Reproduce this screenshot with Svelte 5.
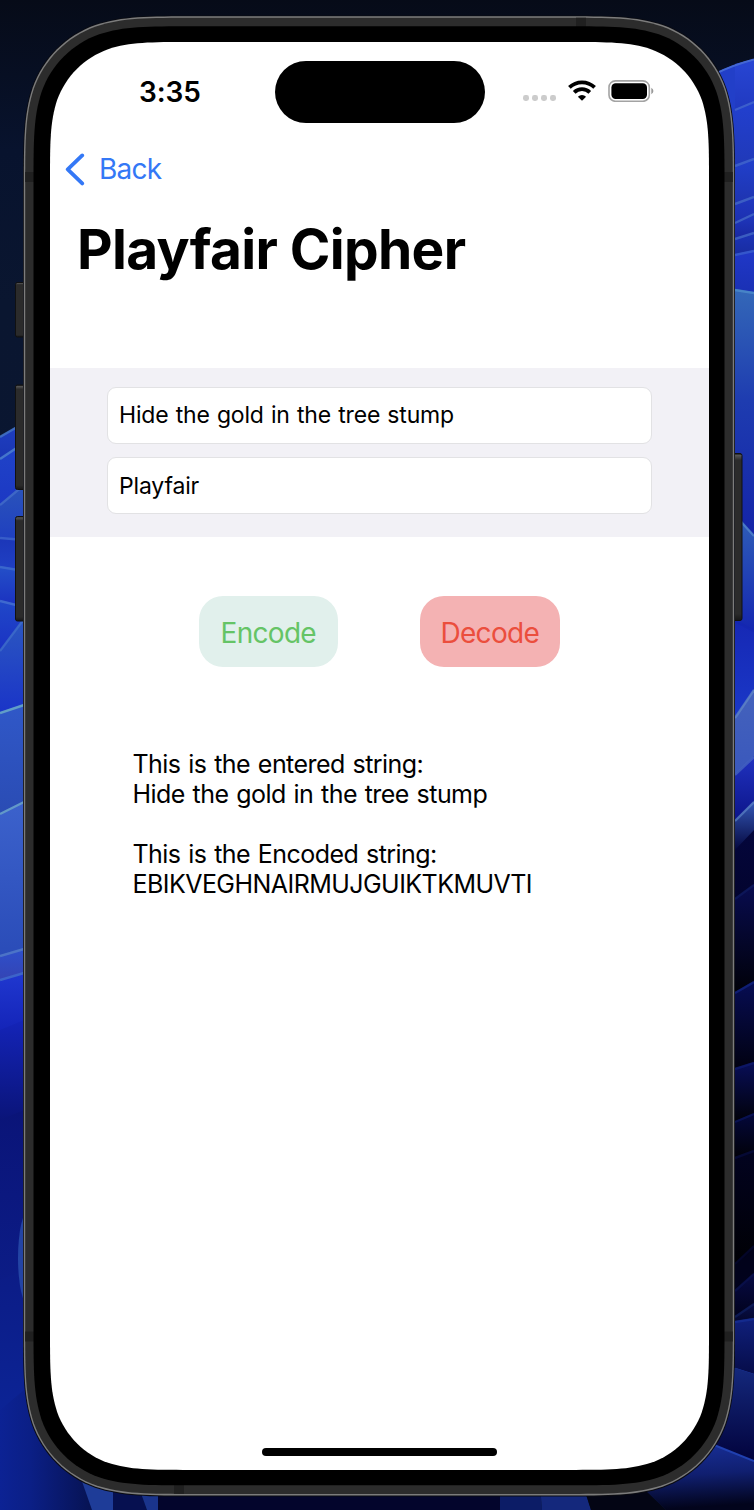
<script>
  let message = $state('Hide the gold in the tree stump');
  let key = $state('Playfair');
  const output = 'This is the entered string:\nHide the gold in the tree stump\n\nThis is the Encoded string:\nEBIKVEGHNAIRMUJGUIKTKMUVTI';

  // Continuous-curvature rounded rectangle
  function squircle(x, y, w, h, r) {
    const corner = (cx, cy, ax, ay, bx, by) => {
      // a: direction along the incoming edge, b: direction along the outgoing edge
      const p = (u, v) => `${(cx - ax * u * r + bx * v * r).toFixed(2)} ${(cy - ay * u * r + by * v * r).toFixed(2)}`;
      return `L${p(1.52866, 0)}C${p(1.08849, 0)} ${p(0.86841, 0)} ${p(0.63149, 0.0775)}` +
        `C${p(0.37282, 0.16906)} ${p(0.16906, 0.37282)} ${p(0.0775, 0.63149)}` +
        `C${p(0, 0.86841)} ${p(0, 1.08849)} ${p(0, 1.52866)}`;
    };
    return (`M${x + w / 2} ${y}` + corner(x + w, y, 1, 0, 0, 1) + corner(x + w, y + h, 0, 1, -1, 0) +
      corner(x, y + h, -1, 0, 0, -1) + corner(x, y, 0, -1, 1, 0) + 'Z');
  }

  // Wallpaper petals: y at the left end, y at the right end, edge, top, bottom colours
  const leftPetals = [
    [436, 422, '#4f83c4', '#1f3fc0', '#1a36b4'],
    [458, 442, '#5a92d0', '#2044c8', '#1c38c4'],
    [504, 484, '#4a74cc', '#2b55ba', '#1f3fc0'],
    [537, 539, '#4672d2', '#1b36b8', '#2040c4'],
    [566, 570, '#4674d0', '#2450c8', '#1a30c0'],
    [600, 606, '#4f7cd4', '#2048c8', '#1a32c4'],
    [650, 618, '#4474cc', '#2c58c0', '#1a34c8'],
    [712, 704, '#7cc4c8', '#3058c8', '#2a4cb4'],
    [813, 801, '#78b8c8', '#3c62cc', '#2a4cb8'],
    [955, 948, '#5c88c8', '#2e50cc', '#3444b4'],
    [979, 972, '#4c7cc8', '#2038d0', '#1424b8'],
    [1030, 1020, '#1424b8', '#1424b8', '#0a1478'],
    [1120, 1110, '#0a1478', '#0a1478', '#0c1c86'],
    [1280, 1270, '#0c1c86', '#0c1c86', '#0c2496'],
    [1420, 1410, '#0c2496', '#0c2496', '#0a1f88']
  ];
  const rightPetals = [
    [64, 59, '#2846d4', '#2846d4', '#2039c0'],
    [109, 101, '#4a70cc', '#2240d0', '#2039b8'],
    [165, 158, '#4a70cc', '#2140cc', '#1e34b0'],
    [203, 196, '#4c74c8', '#2038c0', '#1c30b0'],
    [222, 213, '#4c74c8', '#2038c0', '#1828a0'],
    [238, 232, '#4c74c8', '#1c34b8', '#182ca0'],
    [254, 250, '#4068d0', '#2038c8', '#1a30b4'],
    [289, 292, '#5294d0', '#3468b8', '#1e3cb0'],
    [400, 400, '#1e3cb0', '#1e3cb0', '#1424a8'],
    [514, 535, '#5a90d0', '#3060b8', '#1426b0'],
    [620, 630, '#1426b0', '#1628b4', '#1a38c8'],
    [717, 689, '#668cc8', '#4462bc', '#3a58bc'],
    [774, 756, '#4e70c4', '#2032c0', '#0c1488'],
    [820, 801, '#6088c8', '#3458b8', '#04063c'],
    [850, 830, '#04063c', '#04063c', '#03042e'],
    [898, 884, '#101c60', '#080c50', '#010108'],
    [992, 981, '#142888', '#070d54', '#010110'],
    [1068, 1062, '#101c70', '#080e58', '#010108'],
    [1121, 1113, '#0c1760', '#04083c', '#010108'],
    [1157, 1150, '#080d40', '#020320', '#000004'],
    [1263, 1245, '#050830', '#01021a', '#01021c'],
    [1290, 1273, '#0b1350', '#070b45', '#01021c'],
    [1316, 1303, '#102060', '#09104a', '#04072c'],
    [1321, 1318, '#173098', '#10207c', '#060c48'],
    [1368, 1374, '#2040b4', '#14287c', '#02033c'],
    [1453, 1461, '#122078', '#122078', '#04071c']
  ];
  const band = (list, i, x0, x1) => {
    const [a, b] = list[i];
    const next = list[i + 1] ?? [1510, 1510];
    return `${x0},${a} ${x1},${b} ${x1},${next[1] + 1} ${x0},${next[0] + 1}`;
  };
</script>

{#snippet petals(list, x0, x1, name)}
  {#each list as [a, b, edge, top, bottom], i}
    <linearGradient id="{name}{i}" x1="0" y1="0" x2="0" y2="1">
      <stop offset="0" stop-color={top} />
      <stop offset="1" stop-color={bottom} />
    </linearGradient>
    <polygon points={band(list, i, x0, x1)} fill="url(#{name}{i})" />
    {#if edge !== top}
      <line x1={x0} y1={a + 1} x2={x1} y2={b + 1} stroke={edge} stroke-width="2.4" opacity=".65" />
    {/if}
  {/each}
{/snippet}

<div class="stage">
  <svg class="backdrop" width="754" height="1510" viewBox="0 0 754 1510" aria-hidden="true">
    <defs>
      <linearGradient id="night" x1="0" y1="0" x2="0" y2="1">
        <stop offset="0" stop-color="#060b18" />
        <stop offset=".1" stop-color="#08132e" />
        <stop offset=".2" stop-color="#0a1630" />
        <stop offset="1" stop-color="#0b1734" />
      </linearGradient>
      <linearGradient id="key" x1="0" y1="0" x2="0" y2="1">
        <stop offset="0" stop-color="#111" />
        <stop offset=".012" stop-color="#555" />
        <stop offset=".04" stop-color="#2b2b2b" />
        <stop offset=".96" stop-color="#2b2b2b" />
        <stop offset="1" stop-color="#171717" />
      </linearGradient>
      <linearGradient id="floor">
        <stop offset="0" stop-color="#0c2294" />
        <stop offset=".3" stop-color="#0b1f86" />
        <stop offset="1" stop-color="#06114c" />
      </linearGradient>
      <linearGradient id="petal" x1="0" y1="0" x2=".1" y2="1">
        <stop offset=".1" stop-color="#182f98" />
        <stop offset=".55" stop-color="#101f70" />
        <stop offset="1" stop-color="#02041c" />
      </linearGradient>
    </defs>
    <rect width="754" height="1510" fill="url(#night)" />
    {@render petals(leftPetals, 0, 24, 'l')}
    <path d="M700 80Q727 67 740 63V300H700Z" fill="#223fc8" />
    {@render petals(rightPetals, 735, 754, 'r')}
    <path d="M715 74Q733 65 754 59.5" fill="none" stroke="#4468d4" stroke-width="2" />
    <ellipse cx="29" cy="1258" rx="11" ry="48" fill="#2344a4" />
    <path d="M24 1340H100V1510H0V1410L24 1390Z" fill="url(#floor)" />
    <path d="M78 1470L92 1510H113V1485Z" fill="#1e3c98" />
    <path d="M113 1485V1510H147L138 1485Z" fill="#061050" />
    <path d="M138 1485L147 1510H158V1485Z" fill="#1a348c" />
    <path d="M158 1485H500V1510H158Z" fill="#03052c" />
    <path d="M500 1485H540L542 1510H500Z" fill="#0c1c66" />
    <path d="M540 1485H583L591 1510H542Z" fill="#14287c" />
    <path d="M583 1485H640L666 1510H591Z" fill="#030514" />
    <path d="M700 1368H735L754 1374V1461L714 1445L690 1460Z" fill="url(#r24)" />
    <path d="M640 1485L700 1438L714 1445L754 1461V1510H666Z" fill="url(#petal)" />
    <path d="M714 1445L754 1461" stroke="#2040b0" stroke-width="2" />

    <rect x="15.5" y="282.5" width="12" height="54.5" rx="2" fill="url(#key)" stroke="#111" stroke-width="1" />
    <rect x="15.5" y="385" width="12" height="104.5" rx="2" fill="url(#key)" stroke="#111" stroke-width="1" />
    <rect x="15.5" y="516.5" width="12" height="104.5" rx="2" fill="url(#key)" stroke="#111" stroke-width="1" />
    <rect x="730" y="453.5" width="12" height="167" rx="2" fill="url(#key)" stroke="#111" stroke-width="1" />

    <path d={squircle(23, 15.5, 712, 1481, 114)} fill="#0b0c12" />
    <path d={squircle(23.8, 16.3, 710.4, 1479.2, 113.5)} fill="#7c7c7c" />
    <path d={squircle(25.2, 17.7, 707.6, 1476.2, 112)} fill="#2c2c2c" />
    <g fill="#202020">
      <rect x="25.2" y="172" width="9" height="10" />
      <rect x="724" y="172" width="8.8" height="10" />
      <rect x="25.2" y="1331.5" width="9" height="10" />
      <rect x="724" y="1331.5" width="8.8" height="10" />
      <rect x="576" y="17.7" width="10" height="9" />
      <rect x="174" y="1485" width="10" height="8.8" />
    </g>
    <path d={squircle(33.5, 26.3, 691, 1459, 104)} fill="#000" />
    <path d={squircle(50, 42, 659, 1428, 92)} fill="#fff" />
  </svg>

  <main class="screen">
    <header class="status">
      <span class="time">3:35</span>
      <span class="island"></span>
      <span class="indicators">
        <span class="dots"><i></i><i></i><i></i><i></i></span>
        <svg class="wifi" width="28" height="21" viewBox="0 0 28 21" aria-label="Wi-Fi">
          <g fill="none" stroke="#000" stroke-width="3.8">
            <path d="M1.4 7.4A18.2 18.2 0 0 1 26.6 7.4" />
            <path d="M6.2 12.3A11.2 11.2 0 0 1 21.8 12.3" />
          </g>
          <path d="M14 20.8L9.9 16.7A5.9 5.9 0 0 1 18.1 16.7Z" />
        </svg>
        <svg class="battery" width="46" height="22" viewBox="0 0 46 22" aria-label="Battery">
          <rect x="1" y=".9" width="40.3" height="20.4" rx="6.4" fill="none" stroke="#a3a3a3" stroke-width="1.6" />
          <rect x="3.4" y="3.3" width="35.6" height="15.6" rx="4.2" />
          <path d="M43.3 7.8Q45.4 9 45.4 11T43.3 14.2Z" fill="#999" />
        </svg>
      </span>
    </header>

    <nav>
      <button class="back">
        <svg width="20" height="33" viewBox="0 0 20 33" aria-hidden="true">
          <path d="M17.2 2.4L2.7 16.3L17.2 30.4" fill="none" stroke="#3478f6" stroke-width="3.8" stroke-linecap="round" stroke-linejoin="round" />
        </svg>
        <span>Back</span>
      </button>
    </nav>
    <h1>Playfair Cipher</h1>

    <section class="form">
      <input type="text" bind:value={message} aria-label="Message" />
      <input type="text" bind:value={key} aria-label="Key" />
    </section>

    <section class="actions">
      <button class="encode">Encode</button>
      <button class="decode">Decode</button>
    </section>

    <p class="output">{output}</p>
    <footer><span class="home"></span></footer>
  </main>
</div>

<style>
  :global(body) { margin: 0; background: #060b18; }
  .stage {
    display: grid;
    width: 754px;
    height: 1510px;
    overflow: hidden;
    font-family: Inter, "Liberation Sans", sans-serif;
    color: #000;
  }
  .backdrop, .screen { grid-area: 1 / 1; }
  .screen {
    display: flex;
    flex-direction: column;
    z-index: 1;
    width: 659px;
    height: 1428px;
    margin: 42px 0 0 50px;
  }
  button { border: 0; padding: 0; background: none; font: inherit; }
  .status {
    display: grid;
    grid-template-columns: 224.5px 210px 1fr;
    height: 62px;
    margin-top: 18.7px;
    align-items: center;
  }
  .time { padding-left: 89px; font-size: 28px; font-weight: 600; letter-spacing: -.1px; }
  .island { height: 62px; border-radius: 31px; background: #000; }
  .indicators { display: flex; align-items: center; padding-left: 38px; margin-top: -2px; }
  .dots { display: flex; gap: 3px; margin: 14px 12px 0 0; }
  .dots i { width: 6px; height: 6px; border-radius: 2.4px; background: #ccc; }
  .battery { margin-left: 12px; }
  .wifi { margin-top: -1px; }
  nav { height: 66px; margin-top: 13.5px; display: flex; align-items: center; }
  .back { display: flex; align-items: center; gap: 14px; margin-left: 15px; color: #3478f6; font-size: 28px; letter-spacing: -.8px; }
  h1 { margin: 11.8px 0 0 27px; font-size: 55px; line-height: 70px; font-weight: 700; letter-spacing: -.65px; }
  .form {
    display: flex;
    flex-direction: column;
    gap: 13.5px;
    height: 169.5px;
    margin-top: 84px;
    padding: 19px 57px 0;
    box-sizing: border-box;
    background: #f2f1f6;
  }
  input {
    box-sizing: border-box;
    width: 545px;
    height: 57px;
    padding: 0 11px;
    border: 1px solid #e2e2e4;
    border-radius: 9px;
    background: #fff;
    color: #000;
    font: 23px Inter, "Liberation Sans", sans-serif;
    letter-spacing: -.17px;
    word-spacing: .9px;
    outline: 0;
  }
  .actions { display: flex; gap: 82px; margin: 59px 0 0 148.5px; }
  .actions button { width: 139.5px; height: 70.5px; padding-top: 3px; border-radius: 24px; font-size: 28px; letter-spacing: -.7px; }
  .encode { background: #e1f0ec; color: #65c466; }
  .decode { background: #f4b2b3; color: #eb4e3d; }
  .output { margin: 82.5px 0 0 82.5px; font-size: 25px; line-height: 30px; letter-spacing: -.55px; word-spacing: 1.3px; white-space: pre-line; }
  footer { display: flex; justify-content: center; margin-top: auto; padding-bottom: 14.2px; }
  .home { width: 235px; height: 8px; border-radius: 4px; background: #000; }
</style>
